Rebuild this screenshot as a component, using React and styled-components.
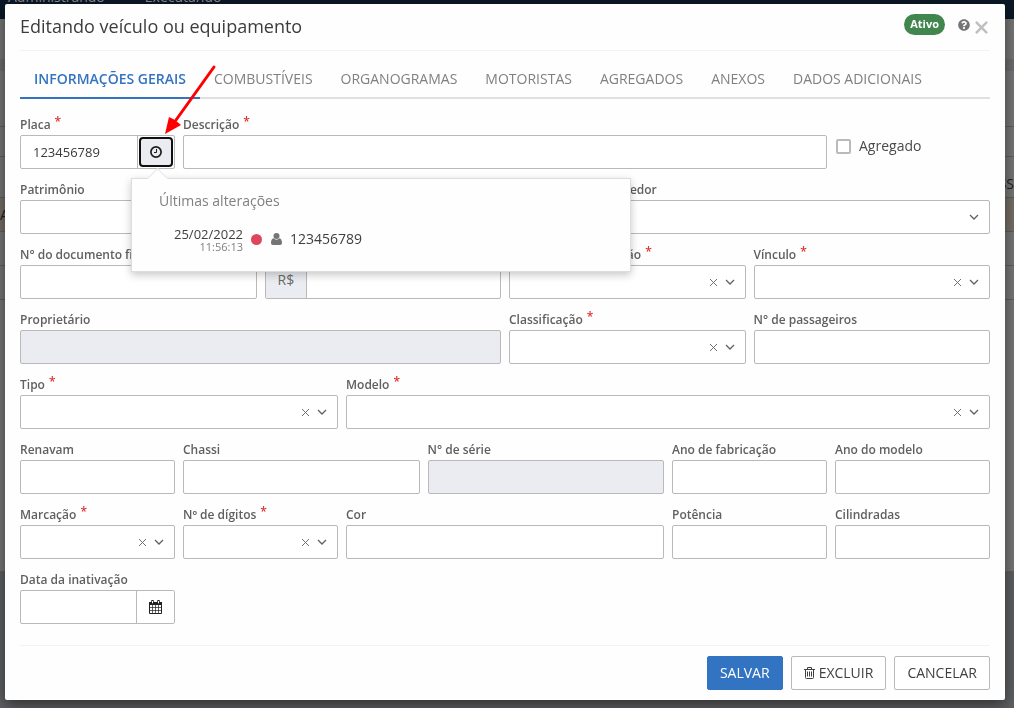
import { useState } from "react";
import styled, { createGlobalStyle, css } from "styled-components";
import { FaQuestionCircle } from "react-icons/fa";

const GlobalStyle = createGlobalStyle`
    * {
        box-sizing: border-box;
    }
    html, body {
        margin: 0;
        height: 100%;
        overflow: hidden;
    }
    body, input, select, button {
        font-family: "Open Sans", "Noto Sans", sans-serif;
    }
`

/* page behind the dialog */
const Page = styled.div`
    height: 100vh;
    display: flex;
    flex-direction: column;
    overflow: hidden;
    background: #5f6063;
    color: #222;
    font-size: 14px;
`
const Nav = styled.nav`
    display: flex;
    flex: none;
    align-items: flex-end;
    gap: 40px;
    height: 19px;
    padding: 0 8px 12px;
    overflow: hidden;
    background: #0b1827;
    color: #8d8f92;
    font-weight: 500;
    line-height: 20px;
`
const Panel = styled.div`
    flex: none;
    height: ${p => p.$height}px;
    background: ${p => p.$tone || "#777777"};
`
const ListRow = styled.div`
    display: flex;
    flex: none;
    align-items: ${p => p.$end ? "flex-end" : "center"};
    justify-content: space-between;
    height: ${p => p.$height || 34}px;
    padding-bottom: ${p => p.$end ? 4 : 0}px;
    border-bottom: 1px solid #5f5f5f;
    background: ${p => p.$tone || "#777777"};
`
const Backdrop = styled.div`
    position: fixed;
    inset: 0;
    padding: 4px 9px 8px 5px;
`

const Modal = styled.section`
    display: flex;
    flex-direction: column;
    min-height: 100%;
    padding: 0 15px 10px;
    border-radius: 2px;
    background: #fefefe;
    box-shadow: 0 5px 15px rgba(0, 0, 0, 0.5);
`
const ModalHeader = styled.header`
    display: flex;
    align-items: flex-start;
    height: 47px;
    padding-top: 10px;
    border-bottom: 1px solid #f3f3f5;
`
const Title = styled.h1`
    flex: 1;
    margin: 0;
    color: #3c3c3c;
    font-size: 18px;
    font-weight: 400;
    line-height: 24px;
`
const Badge = styled.span`
    height: 21px;
    margin-right: 12px;
    padding: 0 6px;
    border-radius: 11px;
    background: #42864f;
    color: #fff;
    font-size: 11px;
    font-weight: 700;
    line-height: 20px;
`
const HeaderButton = styled.button`
    display: flex;
    margin: 0;
    padding: ${p => p.$low ? "7px 2px 0 4px" : "5px 1px 0"};
    border: 0;
    background: none;
    color: ${p => p.$low ? "#bfbfbf" : "#757575"};
`

const Tabs = styled.div`
    display: flex;
    border-bottom: 2px solid #dfdfe4;
`
const Tab = styled.button`
    margin: 0 0 -2px;
    padding: 18px 14px 8px;
    border: 0;
    border-bottom: 2px solid ${p => p.$active ? "#3374c2" : "transparent"};
    background: none;
    color: ${p => p.$active ? "#3374c2" : "#808080"};
    font-size: 14px;
    font-weight: ${p => p.$active ? 600 : 400};
    line-height: 20px;
    white-space: nowrap;
`

const Form = styled.form`
    flex: 1;
    display: flex;
    flex-direction: column;
`
const Grid = styled.div`
    flex: 1;
    display: grid;
    grid-template-columns: repeat(12, minmax(0, 1fr));
    align-content: start;
    gap: 12px 8px;
    padding: 17px 0 20px;
`
const Cell = styled.div`
    position: relative;
    grid-column: span ${p => p.$span};
`
const Label = styled.label`
    display: flex;
    height: 19px;
    color: #606060;
    font-size: 12px;
    font-weight: 600;
    line-height: 18px;
    white-space: nowrap;
`
const Required = styled.span`
    margin-left: 4px;
    color: #dd3333;
    font-size: 12px;
    line-height: 12px;
`
const Box = styled.div`
    display: flex;
    height: 34px;
    border: 1px solid #b9b9b9;
    border-radius: 2px;
    background: ${p => p.$disabled ? "#ebecf1" : "#fff"};
    overflow: hidden;
`
const control = css`
    flex: 1;
    min-width: 0;
    margin: 0;
    padding: 0 12px;
    border: 0;
    outline: 0;
    background: transparent;
    color: #3a3a3a;
    font-size: 13px;
`
const Input = styled.input`
    ${control}
`
const Select = styled.select`
    ${control}
    appearance: none;
`
const ClearButton = styled.button`
    display: flex;
    align-items: center;
    margin: 0;
    padding: 0 7px 0 0;
    border: 0;
    background: none;
    color: #707070;
`
const Chevron = styled.span`
    display: flex;
    align-items: center;
    padding-right: 10px;
    color: #606060;
    pointer-events: none;
`
const Addon = styled.span`
    padding: 0 12px;
    border-right: 1px solid #b9b9b9;
    background: #ebecf1;
    color: #6a6a6a;
    font-size: 14px;
    line-height: 28px;
`
const AddonButton = styled.button`
    display: flex;
    align-items: center;
    justify-content: center;
    width: 38px;
    margin: 0;
    padding: 0;
    border: 0;
    border-left: 1px solid #b9b9b9;
    background: #fff;
    color: #222;
`
const HistorySlot = styled.div`
    display: flex;
    width: 37px;
    padding: 1px;
    border-left: 1px solid #b9b9b9;
`
const HistoryButton = styled.button`
    display: flex;
    flex: 1;
    align-items: center;
    justify-content: center;
    margin: 0;
    padding: 0;
    border: 2px solid #101010;
    border-radius: 4px;
    background: #ebecf1;
    color: #1c1c1c;
`
const CheckLabel = styled.label`
    display: flex;
    align-items: center;
    gap: 8px;
    padding: 20px 0 0 1px;
    color: #4a4a4a;
    font-size: 14px;
    line-height: 20px;
`
const Checkbox = styled.input`
    appearance: none;
    width: 15px;
    height: 15px;
    margin: 0;
    border: 2px solid #bababa;
    border-radius: 2px;
    background: #fff;

    &:checked {
        background: #3374c2;
    }
`

const Popover = styled.div`
    position: absolute;
    z-index: 2;
    top: 62px;
    left: 111px;
    width: 500px;
    height: 94px;
    padding: 11px 27px;
    border: 1px solid #dcdde1;
    background: #fefefe;
    box-shadow: 0 3px 8px rgba(0, 0, 0, 0.22);

    &::before {
        content: "";
        position: absolute;
        top: -8px;
        left: 18px;
        width: 14px;
        height: 14px;
        border: 1px solid #e4e5e8;
        border-width: 1px 0 0 1px;
        background: #fefefe;
        transform: rotate(45deg);
    }
`
const PopoverTitle = styled.h2`
    margin: 0 0 14px;
    color: #808080;
    font-size: 14px;
    font-weight: 400;
    line-height: 22px;
`
const Change = styled.div`
    display: flex;
    align-items: center;
    gap: 8px;
    padding-left: 15px;
    color: #404040;
    font-size: 14px;
    line-height: 24px;
`
const When = styled.time`
    display: flex;
    flex-direction: column;
    text-align: right;
    font-size: 13px;
    line-height: 16px;
`
const Hour = styled.small`
    color: #808080;
    font-size: 11px;
    line-height: 10px;
`
const Dot = styled.span`
    width: 11px;
    height: 11px;
    border-radius: 50%;
    background: #e0455f;
`

const Footer = styled.footer`
    display: flex;
    justify-content: flex-end;
    gap: 8px;
    padding-top: 10px;
    border-top: 1px solid #f3f3f5;
`
const Button = styled.button`
    display: flex;
    align-items: center;
    gap: 4px;
    height: 34px;
    margin: 0;
    padding: 0 12px 1px;
    border: 1px solid ${p => p.$primary ? "#3374c2" : "#b9b9b9"};
    border-radius: 2px;
    background: ${p => p.$primary ? "#3374c2" : "#fff"};
    color: ${p => p.$primary ? "#fff" : "#404040"};
    font-size: 14px;
    font-weight: ${p => p.$primary ? 500 : 400};
`
const Pointer = styled.svg`
    position: absolute;
    z-index: 3;
    top: -52px;
    left: 144px;
    pointer-events: none;
`

function ClockIcon() {
    return <svg width="12" height="12" viewBox="0 0 12 12" fill="none" stroke="currentColor">
        <circle cx="6" cy="6" r="5.1" strokeWidth="1.7" />
        <path d="M6.5 3v3.5H4" strokeWidth="1" />
    </svg>
}

function CalendarIcon() {
    return <svg width="13" height="14" viewBox="0 0 13 14" fill="none" stroke="currentColor">
        <path d="M.5 4v9.500h12V4" />
        <path d="M3.5 5v8M6.5 5v8M9.5 5v8M1 7.500h11M1 10.500h11" strokeWidth=".7" />
        <path d="M0 2h13v3H0z" fill="currentColor" stroke="none" />
        <path d="M3.5 1v2.200M9.5 1v2.200" strokeWidth="2.600" strokeLinecap="round" />
        <path d="M3.5 1v2.300M9.5 1v2.300" stroke="#fff" />
    </svg>
}

function TrashIcon() {
    return <svg width="11" height="12" viewBox="0 0 11 12" fill="none" stroke="currentColor">
        <path d="M0 2.5h11M3.5 2.5v-2h4v2M1.5 2.5v8q0 1 1 1h6q1 0 1-1v-8M3.5 4.5v5M5.5 4.5v5M7.5 4.5v5" />
    </svg>
}

function UserIcon() {
    return <svg width="12" height="12" viewBox="-1 0 12 12" fill="#757575">
        <circle cx="5.5" cy="3" r="3" />
        <path d="M2.6 5.2C.8 5.6 0 7.4 0 9.8 0 11.2.8 12 2 12h7c1.200 0 2-.8 2-2.200 0-2.400-.8-4.200-2.600-4.600a4.100 4.100 0 0 1-5.800 0z" />
    </svg>
}

function Field({ id, label, span, required, disabled, kind = "text", before, after, value, children }) {
    return <Cell $span={span}>
        <Label htmlFor={id}>
            {label}
            {required && <Required>*</Required>}
        </Label>
        <Box $disabled={disabled}>
            {before}
            {kind === "text"
                ? <Input id={id} defaultValue={value} disabled={disabled} />
                : <Select id={id}><option></option></Select>}
            {kind === "clearable" && <ClearButton type="button" aria-label={`Limpar ${label}`}>
                <svg width="9" height="9" viewBox="0 0 9 9" stroke="currentColor">
                    <path d="M1 1l7 7M8 1l-7 7" />
                </svg>
            </ClearButton>}
            {kind !== "text" && <Chevron>
                <svg width="10" height="6" viewBox="0 0 10 6" fill="none" stroke="currentColor" strokeWidth="1.300">
                    <path d="M1 1l4 4 4-4" />
                </svg>
            </Chevron>}
            {after}
        </Box>
        {children}
    </Cell>
}

const tabs = [
    "INFORMAÇÕES GERAIS",
    "COMBUSTÍVEIS",
    "ORGANOGRAMAS",
    "MOTORISTAS",
    "AGREGADOS",
    "ANEXOS",
    "DADOS ADICIONAIS",
]

export default function App() {
    const [tab, setTab] = useState(tabs[0])
    const [open, setOpen] = useState(true)

    return <>
        <GlobalStyle />
        <Page aria-hidden="true">
            <Nav>
                <span>Administrando</span>
                <span>Executando</span>
            </Nav>
            <Panel $height={40} />
            <Panel $height={12} $tone="#6b6d71" />
            <ListRow $height={56} />
            <ListRow $height={30} />
            <ListRow $height={41} $end><span /><span>ISS</span></ListRow>
            <ListRow $tone="#756f66"><span>A</span></ListRow>
            <ListRow />
            <ListRow />
            <Panel $height={271} />
        </Page>
        <Backdrop>
            <Modal role="dialog" aria-labelledby="titulo">
                <ModalHeader>
                    <Title id="titulo">Editando veículo ou equipamento</Title>
                    <Badge>Ativo</Badge>
                    <HeaderButton aria-label="Ajuda"><FaQuestionCircle size={12} /></HeaderButton>
                    <HeaderButton $low aria-label="Fechar">
                        <svg width="13" height="13" viewBox="0 0 14 14" stroke="currentColor" strokeWidth="2.600">
                            <path d="M1 1l12 12M13 1L1 13" />
                        </svg>
                    </HeaderButton>
                </ModalHeader>
                <Tabs role="tablist">
                    {tabs.map(name => <Tab
                        key={name}
                        role="tab"
                        aria-selected={name === tab}
                        $active={name === tab}
                        onClick={() => setTab(name)}
                    >
                        {name}
                    </Tab>)}
                </Tabs>
                <Form onSubmit={e => e.preventDefault()}>
                    <Grid>
                        <Field
                            id="placa" label="Placa" span={2} required value="123456789"
                            after={<HistorySlot>
                                <HistoryButton type="button" aria-label="Últimas alterações" onClick={() => setOpen(!open)}>
                                    <ClockIcon />
                                </HistoryButton>
                            </HistorySlot>}
                        >
                            {open && <Popover>
                                <PopoverTitle>Últimas alterações</PopoverTitle>
                                <Change>
                                    <When>25/02/2022<Hour>11:56:13</Hour></When>
                                    <Dot />
                                    <UserIcon />
                                    <span>123456789</span>
                                </Change>
                            </Popover>}
                            <Pointer width="54" height="72" viewBox="0 0 54 72">
                                <path d="M50 3L12 56" stroke="#fe0000" strokeWidth="3" strokeLinecap="round" />
                                <path d="M1 70L5 53l6 3 6 5z" fill="#fe0000" />
                            </Pointer>
                        </Field>
                        <Field id="descricao" label="Descrição" span={8} required />
                        <Cell $span={2}>
                            <CheckLabel>
                                <Checkbox type="checkbox" />
                                Agregado
                            </CheckLabel>
                        </Cell>

                        <Field id="patrimonio" label="Patrimônio" span={3} />
                        <Field id="centro" label="Centro de custo" span={4} kind="select" />
                        <Field id="fornecedor" label="Fornecedor" span={5} kind="select" />

                        <Field id="documento" label="N° do documento fiscal" span={3} />
                        <Field id="valor" label="Valor de aquisição" span={3} before={<Addon>R$</Addon>} />
                        <Field id="estado" label="Estado de conservação" span={3} kind="clearable" required />
                        <Field id="vinculo" label="Vínculo" span={3} kind="clearable" required />

                        <Field id="proprietario" label="Proprietário" span={6} disabled />
                        <Field id="classificacao" label="Classificação" span={3} kind="clearable" required />
                        <Field id="passageiros" label="N° de passageiros" span={3} />

                        <Field id="tipo" label="Tipo" span={4} kind="clearable" required />
                        <Field id="modelo" label="Modelo" span={8} kind="clearable" required />

                        <Field id="renavam" label="Renavam" span={2} />
                        <Field id="chassi" label="Chassi" span={3} />
                        <Field id="serie" label="N° de série" span={3} disabled />
                        <Field id="fabricacao" label="Ano de fabricação" span={2} />
                        <Field id="ano" label="Ano do modelo" span={2} />

                        <Field id="marcacao" label="Marcação" span={2} kind="clearable" required />
                        <Field id="digitos" label="Nº de dígitos" span={2} kind="clearable" required />
                        <Field id="cor" label="Cor" span={4} />
                        <Field id="potencia" label="Potência" span={2} />
                        <Field id="cilindradas" label="Cilindradas" span={2} />

                        <Field
                            id="inativacao" label="Data da inativação" span={2}
                            after={<AddonButton type="button" aria-label="Abrir calendário"><CalendarIcon /></AddonButton>}
                        />
                    </Grid>
                    <Footer>
                        <Button type="submit" $primary>SALVAR</Button>
                        <Button type="button"><TrashIcon />EXCLUIR</Button>
                        <Button type="button">CANCELAR</Button>
                    </Footer>
                </Form>
            </Modal>
        </Backdrop>
    </>
}
